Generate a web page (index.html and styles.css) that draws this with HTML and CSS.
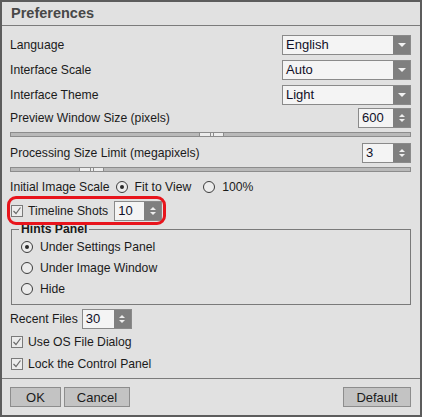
FILE: index.html
```html
<!DOCTYPE html>
<html lang="en">
<head>
  <meta charset="UTF-8" />
  <title>Preferences</title>
  <link rel="stylesheet" href="styles.css">
</head>
<body>
  <div class="dialog">
    <div class="title">Preferences</div>

    <div class="content">
      <div class="row row-lang">
        <span>Language</span>
        <div class="combo"><span class="val">English</span><span class="drop"></span></div>
      </div>
      <div class="row row-gap5">
        <span>Interface Scale</span>
        <div class="combo"><span class="val">Auto</span><span class="drop"></span></div>
      </div>
      <div class="row row-gap5">
        <span>Interface Theme</span>
        <div class="combo"><span class="val">Light</span><span class="drop"></span></div>
      </div>

      <div class="row row-preview">
        <span>Preview Window Size (pixels)</span>
        <div class="spin spin-preview"><span class="val">600</span><span class="spin-btn"><i class="up"></i><i class="down"></i></span></div>
      </div>
      <div class="slider"><div class="thumb" style="margin-left: 188px"><i></i><i></i></div></div>

      <div class="row row-processing">
        <span>Processing Size Limit (megapixels)</span>
        <div class="spin spin-processing"><span class="val">3</span><span class="spin-btn"><i class="up"></i><i class="down"></i></span></div>
      </div>
      <div class="slider"><div class="thumb" style="margin-left: 68px"><i></i><i></i></div></div>

      <div class="row row-scale">
        <span>Initial Image Scale</span>
        <span class="radio checked scale-fit"></span><span>Fit to View</span>
        <span class="radio scale-100"></span><span>100%</span>
      </div>

      <div class="row row-timeline">
        <span class="check"><svg width="10" height="10" viewBox="0 0 10 10"><path d="M1.5 5 L4 7.5 L8.5 1.5" fill="none" stroke="#6b6b6b" stroke-width="1.2"/></svg></span>
        <span class="timeline-label">Timeline Shots</span>
        <div class="spin spin-timeline"><span class="val">10</span><span class="spin-btn"><i class="up"></i><i class="down"></i></span></div>
      </div>

      <div class="group">
        <span class="legend">Hints Panel</span>
        <div class="group-row first"><span class="radio checked"></span><span>Under Settings Panel</span></div>
        <div class="group-row"><span class="radio"></span><span>Under Image Window</span></div>
        <div class="group-row"><span class="radio"></span><span>Hide</span></div>
      </div>

      <div class="row row-recent">
        <span>Recent Files</span>
        <div class="spin spin-recent"><span class="val">30</span><span class="spin-btn"><i class="up"></i><i class="down"></i></span></div>
      </div>
      <div class="row row-check row-os">
        <span class="check"><svg width="10" height="10" viewBox="0 0 10 10"><path d="M1.5 5 L4 7.5 L8.5 1.5" fill="none" stroke="#6b6b6b" stroke-width="1.2"/></svg></span>
        <span>Use OS File Dialog</span>
      </div>
      <div class="row row-check row-lock">
        <span class="check"><svg width="10" height="10" viewBox="0 0 10 10"><path d="M1.5 5 L4 7.5 L8.5 1.5" fill="none" stroke="#6b6b6b" stroke-width="1.2"/></svg></span>
        <span>Lock the Control Panel</span>
      </div>
    </div>

    <div class="footer">
      <button class="btn btn-ok">OK</button>
      <button class="btn btn-cancel">Cancel</button>
      <button class="btn btn-default">Default</button>
    </div>

    <!-- red highlight drawn over the timeline row -->
    <div class="highlight"></div>
  </div>
</body>
</html>
```

FILE: styles.css
```css
* { box-sizing: border-box; }

body {
  margin: 0;
  font-family: 'Liberation Sans', Arial, sans-serif;
  font-size: 12.2px;
  color: #1b1b1b;
  background: #e1e1e1;
}

.dialog {
  position: relative;
  width: 422px;
  height: 417px;
  border: 2px solid #5c5c5c;
  background: #e1e1e1;
  display: flex;
  flex-direction: column;
}

.title {
  height: 24px;
  line-height: 23px;
  padding-left: 9px;
  border-bottom: 1px solid #7b7b7b;
  font-size: 14.5px;
  font-weight: bold;
  color: #484848;
}

.content {
  flex: 1;
  padding: 0 9px 0 8px;
  display: flex;
  flex-direction: column;
}

.row {
  height: 20px;
  display: flex;
  align-items: center;
  justify-content: space-between;
}

.row-lang { margin-top: 9px; }
.row-gap5 { margin-top: 5px; }
.row-preview { margin-top: 3px; }
.row-processing { margin-top: 6px; }

/* combo box */
.combo {
  width: 129px;
  height: 20px;
  border: 1px solid #8a8a8a;
  background: #f4f4f4;
  display: flex;
}

.val {
  flex: 1;
  padding-left: 3px;
  line-height: 18px;
  font-size: 13px;
  color: #101028;
}

.drop {
  width: 17px;
  background: #7f7f7f;
  display: flex;
  align-items: center;
  justify-content: center;
}

.drop::after {
  content: "";
  border-left: 4px solid transparent;
  border-right: 4px solid transparent;
  border-top: 4px solid #f2f2f2;
}

/* spin box */
.spin {
  height: 20px;
  border: 1px solid #8a8a8a;
  background: #f4f4f4;
  display: flex;
}

.spin-preview { width: 53px; }
.spin-processing { width: 49px; }
.spin-timeline { width: 48px; }
.spin-recent { width: 50px; }

.spin-btn {
  width: 17px;
  background: #7f7f7f;
  display: flex;
  flex-direction: column;
  align-items: center;
  justify-content: center;
  gap: 2px;
}

.spin-btn .up {
  border-left: 3px solid transparent;
  border-right: 3px solid transparent;
  border-bottom: 3px solid #eeeeee;
}

.spin-btn .down {
  border-left: 3px solid transparent;
  border-right: 3px solid transparent;
  border-top: 3px solid #eeeeee;
}

/* slider */
.slider {
  margin-top: 4px;
  height: 5px;
  border: 1px solid #8c8c8c;
  background: #b9b9b9;
  display: flex;
}

.thumb {
  width: 25px;
  margin-top: -1px;
  height: 5px;
  border: 1px solid #8c8c8c;
  background: #ececec;
  display: flex;
  justify-content: center;
  gap: 2px;
}

.thumb i {
  width: 1px;
  background: #8c8c8c;
}

/* radio + check */
.radio {
  width: 12px;
  height: 12px;
  border: 1px solid #3c3c3c;
  border-radius: 50%;
  background: #ececec;
  display: flex;
  align-items: center;
  justify-content: center;
}

.radio.checked::after {
  content: "";
  width: 4px;
  height: 4px;
  border-radius: 50%;
  background: #2a2a2a;
}

.check {
  width: 12px;
  height: 12px;
  border: 1px solid #7a7a7a;
  background: #ececec;
  display: flex;
  align-items: center;
  justify-content: center;
}

.row-scale {
  margin-top: 5px;
  justify-content: flex-start;
}

.scale-fit { margin: 0 7px 0 6px; }
.scale-100 { margin: 0 7px 0 12px; }

.row-timeline {
  margin-top: 4px;
  justify-content: flex-start;
  padding-left: 1px;
}

.timeline-label { margin: 0 6px 0 5px; }

/* hints group */
.group {
  position: relative;
  margin: 8px 0 0 1px;
  height: 76px;
  border: 1px solid #7a7a7a;
  padding: 7px 0 0 9px;
}

.legend {
  position: absolute;
  left: 7px;
  top: -8px;
  padding: 0 2px;
  background: #e1e1e1;
  font-weight: bold;
  line-height: 14px;
}

.group-row {
  height: 20px;
  margin-top: 1px;
  display: flex;
  align-items: center;
  gap: 7px;
}

.group-row.first { margin-top: 0; }

.row-recent {
  margin-top: 4px;
  justify-content: flex-start;
  gap: 4px;
}

.row-check {
  justify-content: flex-start;
  padding-left: 1px;
  gap: 5px;
}

.row-os { margin-top: 3px; }
.row-lock { margin-top: 2px; }

/* footer */
.footer {
  height: 37px;
  border-top: 1px solid #7b7b7b;
  padding: 8px 9px 0 8px;
  display: flex;
  align-items: flex-start;
}

.btn {
  height: 20px;
  border: 1px solid #8d8d8d;
  background: #c3c3c3;
  font-family: inherit;
  font-size: 13px;
  color: #1b1b1b;
  padding: 0;
}

.btn-ok { width: 51px; }
.btn-cancel { width: 66px; margin-left: 3px; }
.btn-default { width: 68px; margin-left: auto; }

.highlight {
  position: absolute;
  left: 5px;
  top: 194px;
  width: 159px;
  height: 29px;
  border: 3px solid #e8141c;
  border-radius: 9px;
}
```
